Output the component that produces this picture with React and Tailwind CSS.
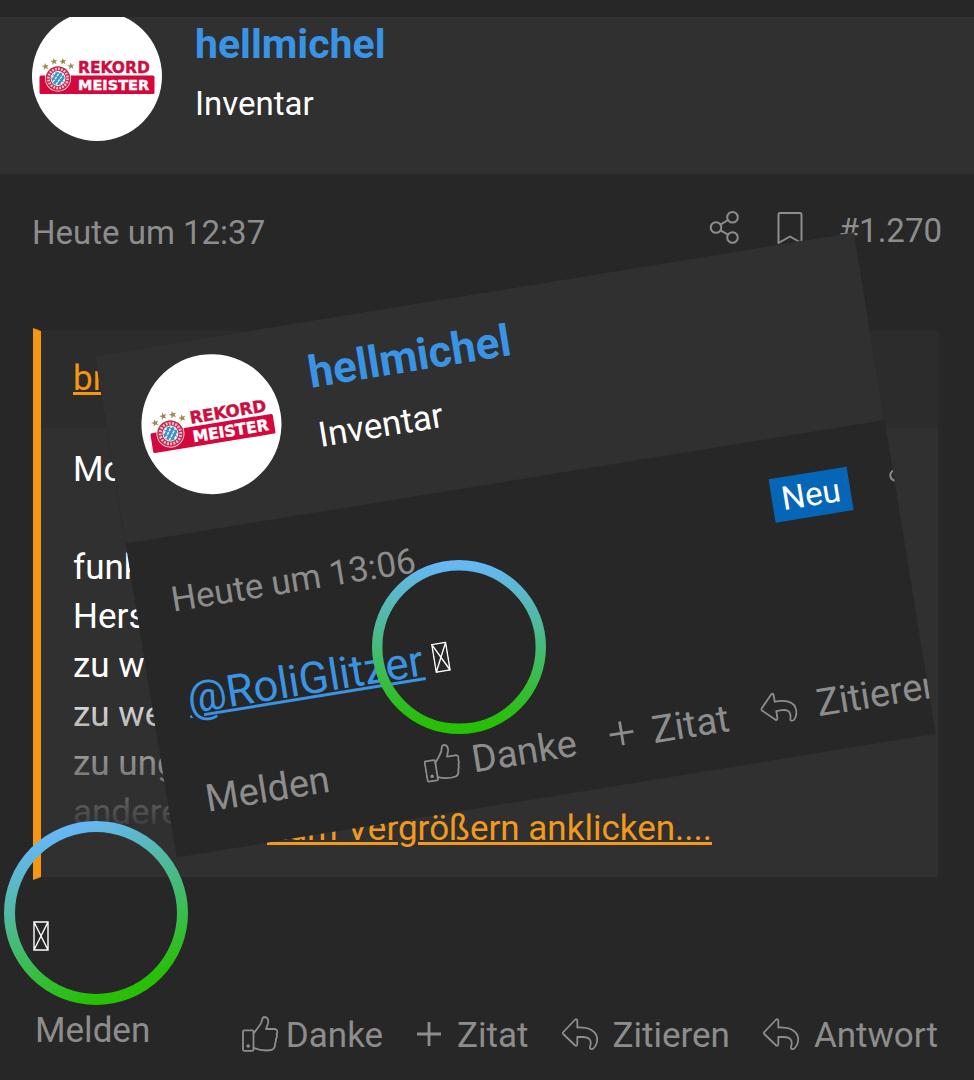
import React from 'react';

const STARS = [
    [13.5, 55.5],
    [22, 50.5],
    [31, 50.5],
    [39, 55],
];

const QUOTE_LINES = ['Mo', '', 'funk', 'Hers', 'zu w', 'zu we', 'zu ung', 'andere'];

function Avatar({ className }) {
    return (
        <svg viewBox="0 0 130 130" className={`shrink-0 rounded-full bg-white ${className}`} role="img" aria-label="hellmichel">
            {STARS.map(([x, y]) => (
                <path
                    key={x}
                    transform={`translate(${x} ${y}) rotate(-8)`}
                    d="M0-3.600 .9-1.100H3.500L1.500.5 2.200 3 0 1.500-2.200 3-1.500.5-3.500-1.100H-.9Z"
                    fill="#a08a54"
                />
            ))}
            <rect x="7.5" y="64.5" width="115" height="18.5" rx="1.5" fill="#d4083c" />
            <text x="46" y="61.5" fontSize="15.5" fontWeight="700" fontFamily="DejaVu Sans, sans-serif" fill="#cc0f3f" stroke="#cc0f3f" strokeWidth=".4">REKORD</text>
            <text x="46" y="79" fontSize="14.5" fontWeight="700" fontFamily="DejaVu Sans, sans-serif" fill="#fff" stroke="#fff" strokeWidth=".4">MEISTER</text>
            <circle cx="26" cy="67.5" r="13" fill="#fff" />
            <circle cx="26" cy="67.5" r="12.3" fill="#c42a4e" />
            <circle cx="26" cy="67.5" r="9.6" fill="none" stroke="#f0c9d2" strokeWidth="2.6" strokeDasharray="1.7 1.3" />
            <circle cx="26" cy="67.5" r="7.4" fill="#fff" />
            <circle cx="26" cy="67.5" r="6.6" fill="#3c93c9" />
            <path
                d="M20 66.5 23 62M21 71l7-10M24 73.5l7.5-10.5M29 73l3.4-4.6"
                stroke="#fff"
                strokeWidth="1.3"
                strokeDasharray="2.6 1"
            />
        </svg>
    );
}

function ShareIcon({ className = '' }) {
    return (
        <svg viewBox="0 0 32 34" className={`h-[34px] w-8 shrink-0 ${className}`} fill="none" stroke="currentColor" strokeWidth="2">
            <circle cx="7" cy="16.5" r="5.3" />
            <circle cx="23.5" cy="6.3" r="5.3" />
            <circle cx="23.5" cy="26.5" r="5.3" />
            <path d="M11.500 13.700 19 9M11.500 19.300 19 23.700" />
        </svg>
    );
}

function BookmarkIcon() {
    return (
        <svg viewBox="0 0 26 34" className="h-[34px] w-[26px] shrink-0" fill="none" stroke="currentColor" strokeWidth="2" strokeLinejoin="round">
            <path d="M1.500 3.500Q1.500 2 3 2H23Q24.500 2 24.500 3.500V32L13 25.500 1.500 32Z" />
        </svg>
    );
}

function ThumbIcon() {
    return (
        <svg viewBox="0 0 36 36" className="h-9 w-9 shrink-0" fill="none" stroke="currentColor" strokeWidth="1.8" strokeLinejoin="round" strokeLinecap="round">
            <rect x="1" y="14.3" width="10.5" height="20.5" rx="1.2" />
            <path d="M11.500 17.500C14.500 13.500 18 9.500 19.300 6.500 20.500 3.500 20 1.200 22.200 1 26.500 1 26.500 5 26 7.500L24 13H32.500C35.500 13.200 36 16 34.600 18 35.500 20 34.800 21.500 34 22.800 34.200 24.800 33.800 26.500 33 27.700 33.200 30.500 32 33 29.500 34 24 35 18 34.500 11.500 31.800" />
            <circle cx="6.2" cy="30" r=".9" fill="currentColor" />
        </svg>
    );
}

function PlusIcon() {
    return (
        <svg viewBox="0 0 26 26" className="h-[26px] w-[26px] shrink-0" fill="none" stroke="currentColor" strokeWidth="2.8">
            <path d="M13 1v24M1 13h24" />
        </svg>
    );
}

function ReplyIcon() {
    return (
        <svg viewBox="0 0 36 32" className="h-8 w-9 shrink-0" fill="none" stroke="currentColor" strokeWidth="1.8" strokeLinejoin="round" strokeLinecap="round">
            <path d="M.9 14.500 13.200 1.500Q15.300.6 15.300 3V9.500C26 9 35.500 12.500 35.200 22 35 26 32.500 30 30.500 31 28 31.500 27.500 30 28.200 28 30 22 27 19 21 19H15.300V26Q15 28.500 13.200 27.500L1.200 16Q.3 15 .9 14.500Z" />
        </svg>
    );
}

function MissingGlyph({ className = '' }) {
    return (
        <svg viewBox="0 0 16 30" className={`h-[30px] w-4 shrink-0 text-white ${className}`} fill="none" stroke="currentColor" strokeWidth="1.4">
            <path d="M1 1h14v28H1ZM1 1l14 28M15 1 1 29" />
        </svg>
    );
}

function Ring({ id, turn, className }) {
    return (
        <svg viewBox="0 0 184 184" className={`pointer-events-none absolute ${className}`} fill="none">
            <defs>
                <linearGradient id={id} gradientUnits="userSpaceOnUse" x1="92" y1="0" x2="92" y2="184" gradientTransform={`rotate(${turn} 92 92)`}>
                    <stop offset="0.03" stopColor="#66b7f3" />
                    <stop offset="0.93" stopColor="#28bf07" />
                </linearGradient>
            </defs>
            <circle cx="92" cy="92" r="86.5" stroke={`url(#${id})`} strokeWidth="11" />
        </svg>
    );
}

function Action({ icon, label, gap = 'gap-[15px]' }) {
    return (
        <button type="button" className={`flex shrink-0 items-center ${gap}`}>
            <span className="pb-1">{icon}</span>
            <span>{label}</span>
        </button>
    );
}

function OverlayPost() {
    return (
        <article className="absolute left-[95px] top-[356px] w-[769px] origin-top-left -rotate-[9.25deg] overflow-hidden bg-[#272727] whitespace-nowrap text-[#8d8d8d]">
            <header className="flex h-[190px] gap-[34px] bg-[#303030] pl-[34px] pt-4">
                <Avatar className="size-[140px]" />
                <div className="pt-[11px]">
                    <a href="#hellmichel" className="block text-[44px] font-bold leading-[48px] text-[#3a94e6]">hellmichel</a>
                    <p className="mt-5 text-[35px] leading-10 text-white">Inventar</p>
                </div>
            </header>

            <div className="flex items-start pl-9 pt-10">
                <time className="pt-1 text-[35px] leading-10">Heute um 13:06</time>
                <span className="ml-auto bg-[#0566b8] px-[10px] text-[33px] leading-[44px] text-white">Neu</span>
                <ShareIcon className="-mr-[27px] ml-10" />
            </div>

            <div className="mt-[53px] flex items-center gap-[10px] pl-9">
                <a href="#RoliGlitzer" className="text-[44px] leading-[52px] text-[#3a94e6] underline decoration-[3px]">@RoliGlitzer</a>
                <MissingGlyph />
            </div>

            <footer className="mt-[52px] flex items-start pb-[25px] pl-[38px] text-[38px] leading-[48px]">
                <button type="button" className="mr-24 shrink-0">Melden</button>
                <div className="flex gap-[33px] pt-1">
                    <Action icon={<ThumbIcon />} label="Danke" gap="gap-3" />
                    <Action icon={<PlusIcon />} label="Zitat" gap="gap-[18px]" />
                    <Action icon={<ReplyIcon />} label="Zitieren" gap="gap-5" />
                </div>
            </footer>
        </article>
    );
}

export default function App() {
    return (
        <main className="relative min-h-screen overflow-hidden bg-[#272727] pt-[17px] font-['Roboto',sans-serif] text-[#8d8d8d]">
            <header className="flex h-[157px] gap-[33px] overflow-hidden bg-[#303030] pl-8">
                <Avatar className="-mt-1.5 size-[130px]" />
                <div className="pt-[3px]">
                    <a href="#hellmichel" className="block text-[41px] font-bold leading-[48px] text-[#3a94e6]">hellmichel</a>
                    <p className="mt-4 text-[33px] leading-10 text-white">Inventar</p>
                </div>
            </header>

            <div className="flex items-start px-8 pt-[37px] text-[33px] leading-10">
                <time className="pt-0.5">Heute um 12:37</time>
                <div className="ml-auto flex items-start gap-9">
                    <button type="button" aria-label="Teilen"><ShareIcon /></button>
                    <button type="button" aria-label="Lesezeichen"><BookmarkIcon /></button>
                    <a href="#1270">#1.270</a>
                </div>
            </div>

            <blockquote className="mx-[33px] mt-[75px] border-[3px] border-l-8 border-[#282828] border-l-[#f7960f] text-[35px] leading-[49px]">
                <div className="bg-[#2c2c2c] px-8 pb-[25px] pt-[23px]">
                    <a href="#quelle" className="text-[#f7960f] underline decoration-[3px]">br</a>
                </div>
                <div className="relative bg-[#303030] px-8 pb-10 pt-[17px] text-white">
                    {QUOTE_LINES.map((line, i) => (
                        <p key={i} className="min-h-[49px]">{line}</p>
                    ))}
                    {/* fade over the collapsed quote */}
                    <div className="absolute inset-x-0 bottom-0 flex h-[205px] items-end justify-center bg-linear-to-b from-[#303030]/0 to-[#303030] to-80% pb-6">
                        <a href="#mehr" className="text-[#f39a1c] underline decoration-[3px]">Zum Vergrößern anklicken....</a>
                    </div>
                </div>
            </blockquote>

            <div className="pl-[33px] pt-[41px]">
                <MissingGlyph />
            </div>

            <footer className="flex items-end justify-between pb-5 pl-[35px] pr-9 pt-14 text-[35px] leading-[48px]">
                <button type="button" className="mb-[5px]">Melden</button>
                <div className="flex gap-[33px]">
                    <Action icon={<ThumbIcon />} label="Danke" gap="gap-2" />
                    <Action icon={<PlusIcon />} label="Zitat" />
                    <Action icon={<ReplyIcon />} label="Zitieren" />
                    <Action icon={<ReplyIcon />} label="Antwort" />
                </div>
            </footer>

            <OverlayPost />
            <Ring id="ring-top" turn={0} className="left-[372px] top-[560px] size-[174px]" />
            <Ring id="ring-bottom" turn={-20} className="left-1 top-[821px] size-[184px]" />
        </main>
    );
}
